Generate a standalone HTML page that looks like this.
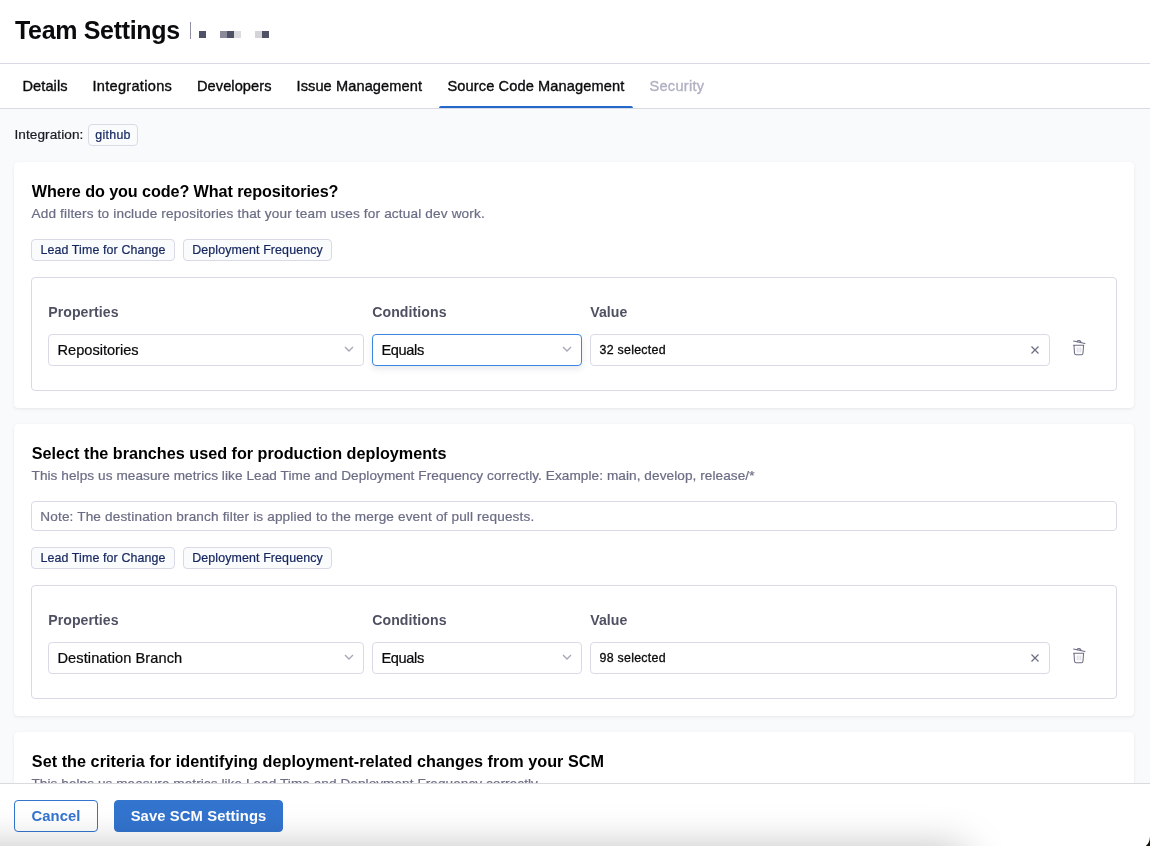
<!DOCTYPE html>
<html lang="en">
<head>
<meta charset="utf-8">
<title>Team Settings</title>
<style>
*{box-sizing:border-box;margin:0;padding:0}
html,body{width:1150px;height:846px;overflow:hidden}
body{font-family:"Liberation Sans",Arial,sans-serif;background:#f9fafc;color:#0b0b0d;position:relative}
.abs{position:absolute;white-space:nowrap}
.header{position:absolute;left:0;top:0;width:1150px;height:64px;background:#fff;border-bottom:1px solid #d9dae6}
.title{left:15px;top:14px;font-size:25px;font-weight:700;line-height:32px;color:#0b0b0d;letter-spacing:-0.33px}
.tbar{position:absolute;left:190px;top:22px;width:1.300px;height:17px;background:#9091a7}
.px{position:absolute;top:31px;width:7px;height:7px}
.tabs{position:absolute;left:0;top:64px;width:1150px;height:45px;background:#fff;border-bottom:1px solid #d9dae6}
.tab{-webkit-text-stroke:.35px currentColor;position:absolute;top:0;height:44px;line-height:44px;font-size:14.6px;color:#0b0b0d;white-space:nowrap}
.tab.dis{color:#b0b1c3}
.tab.act::after{content:"";position:absolute;left:-8.500px;right:-8.700px;bottom:0;height:2px;background:#2468c9;border-radius:2px 2px 0 0}
.intl{left:14.400px;top:125px;letter-spacing:.09px;font-size:13.6px;line-height:20px;color:#1b1c24}
.tag{letter-spacing:.13px;position:absolute;height:22px;border:1px solid #d9dae6;border-radius:4px;background:#fafbfd;color:#16275f;font-size:12.4px;line-height:20px;text-align:center;white-space:nowrap}
.card{position:absolute;left:14px;width:1120px;background:#fff;border-radius:4px;box-shadow:0 1px 3px rgba(96,97,112,.12),0 0 1px rgba(40,41,61,.06)}
.h{left:17.800px;font-size:16.2px;font-weight:700;line-height:22px;color:#000}
.sub,.tag,.note,.sel,.intl{-webkit-text-stroke:.22px currentColor}
.sub{left:17.500px;margin-top:1px;font-size:13.6px;line-height:18px;color:#6b6d85}
.box{position:absolute;left:17px;width:1086px;height:114px;border:1px solid #d9dae6;border-radius:4px;background:#fff}
.lbl{margin-left:.2px;top:25px;letter-spacing:.08px;font-size:14.1px;font-weight:700;line-height:18px;color:#4f5162}
.sel{position:absolute;top:56px;height:32px;border:1px solid #d9dae6;border-radius:4px;background:#fff;font-size:14.6px;line-height:30px;padding-left:8.500px;color:#0b0b0d;white-space:nowrap}
.sel.focus{border-color:#3b86e0;box-shadow:0 3px 6px rgba(30,40,80,.10)}
.sel.val{font-size:12.4px;letter-spacing:.27px;-webkit-text-stroke:.3px currentColor}
.chev{position:absolute;right:9px;top:11px;width:10px;height:6px}
.xx{position:absolute;right:10px;top:11px;width:8px;height:8px}
.trash{position:absolute;left:1040px;top:61px;width:14px;height:17px}
.note{position:absolute;left:17px;width:1086px;height:30px;border:1px solid #d9dae6;border-radius:4px;font-size:13.6px;letter-spacing:.147px;line-height:29.500px;padding-left:8.300px;color:#6b6d85;white-space:nowrap}
.footer{position:absolute;left:0;top:783px;width:1150px;height:63px;background:#fff;border-top:1px solid #d9d9de}
.bshadow{position:absolute;left:-120px;top:848px;width:1085px;height:80px;box-shadow:0 0 40px 0 rgba(0,0,0,.26)}
.corner{position:absolute;left:1144px;top:835px;width:6px;height:11px}
.btn{position:absolute;top:16px;height:32px;border-radius:4px;font-size:14.8px;font-weight:700;line-height:30px;text-align:center;white-space:nowrap;letter-spacing:.1px}
.btn.sec{left:14px;width:84px;border:1px solid #3374cf;color:#3374cf;background:#fff}
.btn.pri{left:114px;width:169px;border:1px solid #3374cf;color:#fff;background:#3374cf}
</style>
</head>
<body><div style="position:absolute;left:0;top:0;width:1150px;height:846px;will-change:transform">
<div class="header">
  <div class="abs title">Team Settings</div>
  <div class="tbar"></div>
  <div class="px" style="left:199px;background:#4f5166"></div>
  <div class="px" style="left:220px;background:#8a8a98"></div>
  <div class="px" style="left:227px;background:#4f5166"></div>
  <div class="px" style="left:234px;background:#dcdce0"></div>
  <div class="px" style="left:255px;background:#d3d3d8"></div>
  <div class="px" style="left:262px;background:#4f5166"></div>
</div>
<div class="tabs">
  <div class="tab" style="left:22.500px;letter-spacing:.07px">Details</div>
  <div class="tab" style="left:92.400px;letter-spacing:.29px">Integrations</div>
  <div class="tab" style="left:197px;letter-spacing:.07px">Developers</div>
  <div class="tab" style="left:296.500px;letter-spacing:.09px">Issue Management</div>
  <div class="tab act" style="left:447.500px;letter-spacing:.11px">Source Code Management</div>
  <div class="tab dis" style="left:649.500px;letter-spacing:.26px">Security</div>
</div>
<div class="abs intl">Integration:</div>
<div class="tag" style="left:88px;top:124px;width:50px;letter-spacing:.3px">github</div>

<div class="card" style="top:162px;height:246px">
  <div class="abs h" style="top:18px;letter-spacing:-.1px">Where do you code? What repositories?</div>
  <div class="abs sub" style="top:42px;letter-spacing:.16px">Add filters to include repositories that your team uses for actual dev work.</div>
  <div class="tag" style="left:17px;top:77px;width:144px">Lead Time for Change</div>
  <div class="tag" style="left:169px;top:77px;width:149px">Deployment Frequency</div>
  <div class="box" style="top:115px">
    <div class="abs lbl" style="left:16px">Properties</div>
    <div class="abs lbl" style="left:340px">Conditions</div>
    <div class="abs lbl" style="left:558px">Value</div>
    <div class="sel" style="left:16px;width:316px">Repositories<svg class="chev" viewBox="0 0 10 6"><path d="M1 1l4 4 4-4" fill="none" stroke="#a7a8ba" stroke-width="1.400"/></svg></div>
    <div class="sel focus" style="left:340px;width:210px;letter-spacing:-.38px">Equals<svg class="chev" viewBox="0 0 10 6"><path d="M1 1l4 4 4-4" fill="none" stroke="#a7a8ba" stroke-width="1.400"/></svg></div>
    <div class="sel val" style="left:558px;width:460px">32 selected<svg class="xx" viewBox="0 0 8 8"><path d="M.5.5l7 7M7.500.5l-7 7" fill="none" stroke="#6b6d85" stroke-width="1.200"/></svg></div>
    <svg class="trash" viewBox="0 0 14 17"><path d="M5.300 8.500v5M7 8.500v5M8.700 8.500v5" fill="none" stroke="#dfe0e7" stroke-width="1.200"/><path d="M1.600 2.100L12.900 4.600M5.200 2.900C5.400.8 8.800 1.300 9.200 3.700M1.500 6.300H11.700M2 6.300L2.500 14Q2.600 15.700 4.200 15.700H9.400Q10.900 15.700 11 14L11.600 6.300" fill="none" stroke="#6b6d85" stroke-width="1.050" stroke-linecap="round"/></svg>
  </div>
</div>

<div class="card" style="top:424px;height:292px">
  <div class="abs h" style="top:18px">Select the branches used for production deployments</div>
  <div class="abs sub" style="top:42px;letter-spacing:.075px">This helps us measure metrics like Lead Time and Deployment Frequency correctly. Example: main, develop, release/*</div>
  <div class="note" style="top:77px">Note: The destination branch filter is applied to the merge event of pull requests.</div>
  <div class="tag" style="left:17px;top:123px;width:144px">Lead Time for Change</div>
  <div class="tag" style="left:169px;top:123px;width:149px">Deployment Frequency</div>
  <div class="box" style="top:161px">
    <div class="abs lbl" style="left:16px">Properties</div>
    <div class="abs lbl" style="left:340px">Conditions</div>
    <div class="abs lbl" style="left:558px">Value</div>
    <div class="sel" style="left:16px;width:316px;letter-spacing:.08px">Destination Branch<svg class="chev" viewBox="0 0 10 6"><path d="M1 1l4 4 4-4" fill="none" stroke="#a7a8ba" stroke-width="1.400"/></svg></div>
    <div class="sel" style="left:340px;width:210px;letter-spacing:-.38px">Equals<svg class="chev" viewBox="0 0 10 6"><path d="M1 1l4 4 4-4" fill="none" stroke="#a7a8ba" stroke-width="1.400"/></svg></div>
    <div class="sel val" style="left:558px;width:460px">98 selected<svg class="xx" viewBox="0 0 8 8"><path d="M.5.5l7 7M7.500.5l-7 7" fill="none" stroke="#6b6d85" stroke-width="1.200"/></svg></div>
    <svg class="trash" viewBox="0 0 14 17"><path d="M5.300 8.500v5M7 8.500v5M8.700 8.500v5" fill="none" stroke="#dfe0e7" stroke-width="1.200"/><path d="M1.600 2.100L12.900 4.600M5.200 2.900C5.400.8 8.800 1.300 9.200 3.700M1.500 6.300H11.700M2 6.300L2.500 14Q2.600 15.700 4.200 15.700H9.400Q10.900 15.700 11 14L11.600 6.300" fill="none" stroke="#6b6d85" stroke-width="1.050" stroke-linecap="round"/></svg>
  </div>
</div>

<div class="card" style="top:732px;height:120px">
  <div class="abs h" style="top:18px;letter-spacing:.04px">Set the criteria for identifying deployment-related changes from your SCM</div>
  <div class="abs sub" style="top:42px;letter-spacing:.06px">This helps us measure metrics like Lead Time and Deployment Frequency correctly.</div>
</div>

<div class="footer">
  <div class="btn sec">Cancel</div>
  <div class="btn pri">Save SCM Settings</div>
</div>
<div class="bshadow"></div>
<svg class="corner" viewBox="0 0 6 11"><path d="M6 1.500Q5.700 8 1.800 11H6z" fill="#17110a"/></svg>
</div></body>
</html>
